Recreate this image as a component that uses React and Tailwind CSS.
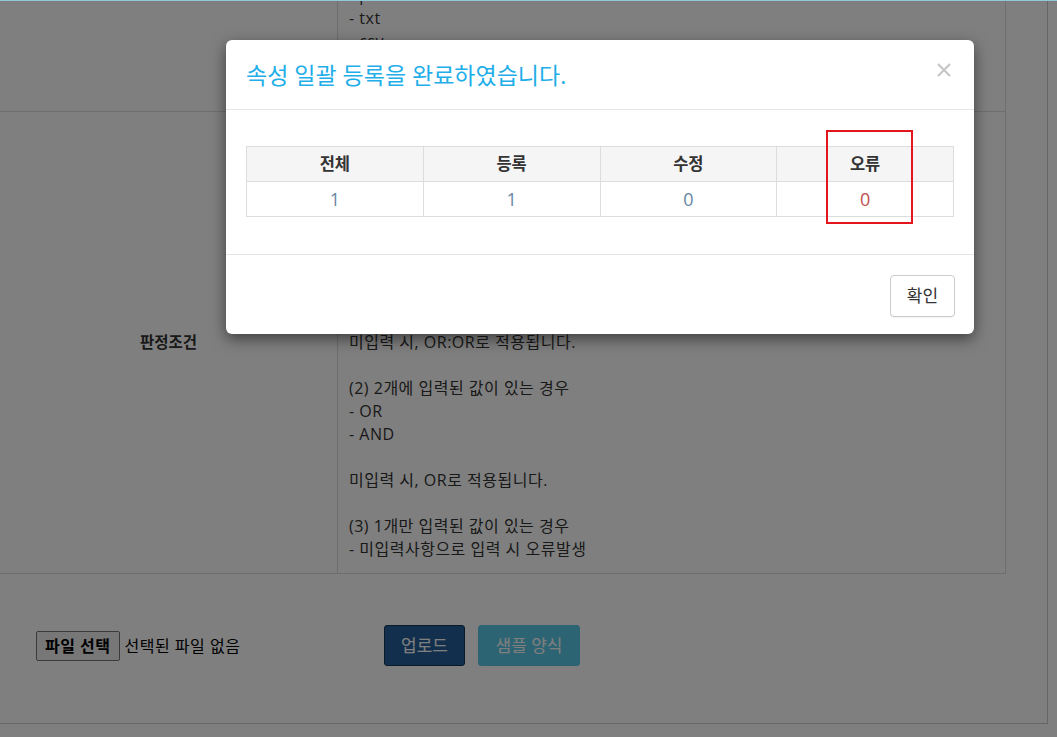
import React from "react";

const FONT = { fontFamily: '"Open Sans", "Noto Sans CJK KR", sans-serif' };

const formatLines = [
  "(1) 업로드 가능한 파일 형식",
  "- hwp",
  "- doc",
  "- docx",
  "- xls",
  "- pdf",
  "- txt",
  "- csv",
  "- xlsx",
  "- pptx",
];

const conditionLines = [
  "(1) 3개에 입력된 값이 있는 경우",
  "- OR:OR",
  "- OR:AND",
  "- AND:OR",
  "- AND:AND",
  "",
  "입력 순서대로 조건이 적용됩니다.",
  "예) 키워드1 OR 키워드2 AND 키워드3",
  "",
  "미입력 시, OR:OR로 적용됩니다.",
  "",
  "(2) 2개에 입력된 값이 있는 경우",
  "- OR",
  "- AND",
  "",
  "미입력 시, OR로 적용됩니다.",
  "",
  "(3) 1개만 입력된 값이 있는 경우",
  "- 미입력사항으로 입력 시 오류발생",
];

function Lines({ items }) {
  return (
    <div className="text-[16px] tracking-[0.5px] leading-[23px] text-[#333]">
      {items.map((l, i) => (
        <div key={i} className="h-[23px] whitespace-nowrap">
          {l}
        </div>
      ))}
    </div>
  );
}

function ResultModal() {
  const heads = ["전체", "등록", "수정", "오류"];
  const vals = ["1", "1", "0", "0"];
  return (
    <div className="absolute left-[226px] top-[40px] w-[748px] bg-white rounded-[6px] shadow-[0_5px_15px_rgba(0,0,0,0.5)]">
      <div className="h-[70px] px-[20px] flex items-center justify-between border-b border-[#e5e5e5]">
        <h4 className="text-[23px] font-normal text-[#1eaee8] pt-[2px]">
          속성 일괄 등록을 완료하였습니다.
        </h4>
        <button className="mr-[3px] mb-[10px]">
          <svg width="14" height="14" viewBox="0 0 14 14">
            <path d="M1 1 L13 13 M13 1 L1 13" stroke="#c6c6c6" strokeWidth="2.2" />
          </svg>
        </button>
      </div>
      <div className="px-[20px] pt-[36px] pb-[37px]">
        <table className="w-[708px] border-collapse table-fixed">
          <thead>
            <tr className="bg-[#f5f5f5]">
              {heads.map((h) => (
                <th
                  key={h}
                  className="h-[35px] border border-[#dddddd] text-[16.5px] font-bold text-[#333] text-center"
                >
                  {h}
                </th>
              ))}
            </tr>
          </thead>
          <tbody>
            <tr>
              {vals.map((v, i) => (
                <td
                  key={i}
                  className={
                    "h-[35px] border border-[#dddddd] text-[18px] text-center " +
                    (i === 3 ? "text-[#c0504d]" : "text-[#6987a3]")
                  }
                >
                  {v}
                </td>
              ))}
            </tr>
          </tbody>
        </table>
      </div>
      <div className="h-[80px] border-t border-[#e5e5e5] px-[19px] flex items-center justify-end">
        <button className="w-[65px] h-[42px] mt-[2px] bg-white border border-[#cccccc] rounded-[4px] text-[17px] text-[#333] shadow-[0_1px_1px_rgba(0,0,0,0.05)]">
          확인
        </button>
      </div>
      <div className="absolute left-[600px] top-[90px] w-[87px] h-[94px] border-2 border-[#e3161d]" />
    </div>
  );
}

export default function App() {
  return (
    <div className="relative w-[1057px] h-[737px] overflow-hidden bg-white" style={FONT}>
      <div className="w-[1048px] h-[724px] border-r border-b border-[#cccccc] overflow-hidden">
        <table className="w-[1007px] -ml-px -mt-[144px] border-collapse table-fixed">
          <colgroup>
            <col className="w-[338px]" />
            <col />
          </colgroup>
          <tbody>
            <tr>
              <td className="border border-[#dddddd] text-center align-middle text-[15.5px] font-bold text-[#333]">
                파일형식
              </td>
              <td className="border border-[#dddddd] pl-[11px] py-[12px] align-top">
                <Lines items={formatLines} />
              </td>
            </tr>
            <tr>
              <td className="border border-[#dddddd] text-center align-middle text-[15.5px] font-bold text-[#333]">
                판정조건
              </td>
              <td className="border border-[#dddddd] pl-[11px] py-[12px] align-top">
                <Lines items={conditionLines} />
              </td>
            </tr>
          </tbody>
        </table>
        <div className="flex items-center pt-[51px] pl-[36px]">
          <div className="w-[348px] flex items-center gap-[5px] text-[16px] text-black">
            <span className="h-[30px] px-[8px] flex items-center bg-[#efefef] border border-[#767676] rounded-[2px] font-bold tracking-[0.5px]">
              파일 선택
            </span>
            <span className="tracking-[0.5px]">선택된 파일 없음</span>
          </div>
          <button className="w-[81px] h-[41px] rounded-[3px] bg-[#24609a] border border-[#143454] text-white text-[17px]">
            업로드
          </button>
          <button className="ml-[13px] w-[102px] h-[41px] rounded-[3px] bg-[#5bc8e6] border border-[#5bc8e6] text-white text-[17px]">
            샘플 양식
          </button>
        </div>
      </div>
      <div className="absolute inset-0 bg-black/50" />
      <div className="absolute left-0 top-0 w-full h-px bg-[#94c6dc]" />
      <ResultModal />
    </div>
  );
}
